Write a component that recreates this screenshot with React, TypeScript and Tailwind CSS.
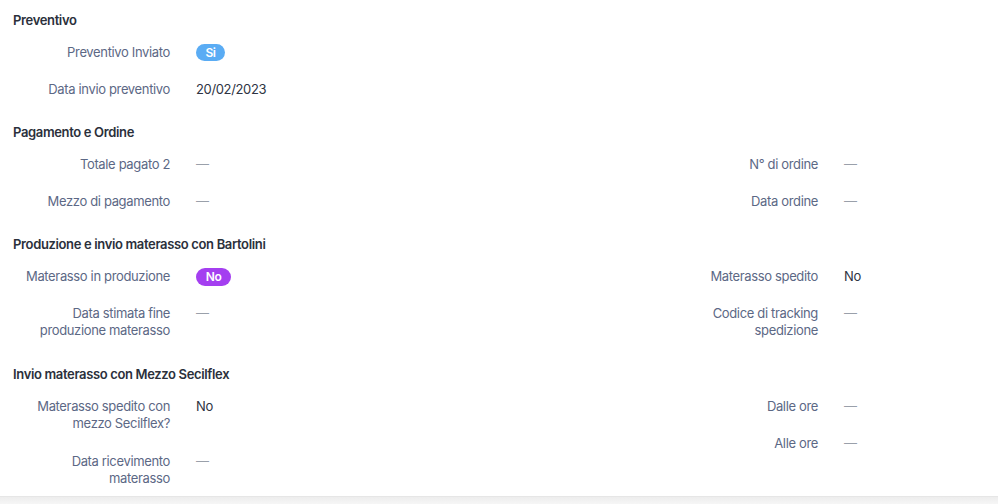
type Field = {
  label: string;
  value?: string;
  badge?: "si" | "no";
  tall?: boolean;
};

type Section = {
  title: string;
  left: Field[];
  right: Field[];
};

const sections: Section[] = [
  {
    title: "Preventivo",
    left: [
      { label: "Preventivo Inviato", badge: "si" },
      { label: "Data invio preventivo", value: "20/02/2023" },
    ],
    right: [],
  },
  {
    title: "Pagamento e Ordine",
    left: [{ label: "Totale pagato 2" }, { label: "Mezzo di pagamento" }],
    right: [{ label: "N° di ordine" }, { label: "Data ordine" }],
  },
  {
    title: "Produzione e invio materasso con Bartolini",
    left: [
      { label: "Materasso in produzione", badge: "no" },
      { label: "Data stimata fine produzione materasso", tall: true },
    ],
    right: [
      { label: "Materasso spedito", value: "No" },
      { label: "Codice di tracking spedizione", tall: true },
    ],
  },
  {
    title: "Invio materasso con Mezzo Secilflex",
    left: [
      { label: "Materasso spedito con mezzo Secilflex?", value: "No", tall: true },
      { label: "Data ricevimento materasso", tall: true },
    ],
    right: [{ label: "Dalle ore" }, { label: "Alle ore" }],
  },
];

function Value({ field }: { field: Field }) {
  if (field.badge === "si") {
    return (
      <span className="inline-flex h-[17px] w-[29px] items-center justify-center rounded-full bg-[#5aacf4] text-[12px] font-semibold leading-none text-white">
        Si
      </span>
    );
  }
  if (field.badge === "no") {
    return (
      <span className="inline-flex h-[18px] w-[35px] items-center justify-center rounded-full bg-[#a43ff0] text-[12px] font-semibold leading-none text-white">
        No
      </span>
    );
  }
  if (field.value) {
    return <span className="text-[#2e3443]">{field.value}</span>;
  }
  return <span className="text-[#9aa0aa]">—</span>;
}

function Row({ field }: { field: Field }) {
  return (
    <div className={`flex items-start pt-[10px] ${field.tall ? "pb-[11px]" : "pb-[10px]"}`}>
      <div className="ml-[20px] w-[150px] shrink-0 text-right text-[#5c6885]">{field.label}</div>
      <div className="ml-[26px] flex h-[17px] items-center">
        <Value field={field} />
      </div>
    </div>
  );
}

export default function App() {
  return (
    <div className="flex min-h-[504px] flex-col bg-white font-[Inter,Liberation_Sans,sans-serif] text-[13px] leading-[17px] tracking-[-0.35px]">
      <div className="h-[496px] overflow-hidden pt-[12px]">
        {sections.map((s, i) => (
          <section key={s.title} className={i === 0 ? "" : "pt-[16px]"}>
            <h3 className="mb-[5px] px-[13px] font-semibold text-[#2b303b]">{s.title}</h3>
            <div className="grid grid-cols-[648px_1fr]">
              <div>
                {s.left.map((f) => (
                  <Row key={f.label} field={f} />
                ))}
              </div>
              <div>
                {s.right.map((f) => (
                  <Row key={f.label} field={f} />
                ))}
              </div>
            </div>
          </section>
        ))}
      </div>
      <div className="h-[8px] border-t border-[#e6e6e6] bg-gradient-to-b from-[#ededed] to-[#f6f6f6]" />
    </div>
  );
}
